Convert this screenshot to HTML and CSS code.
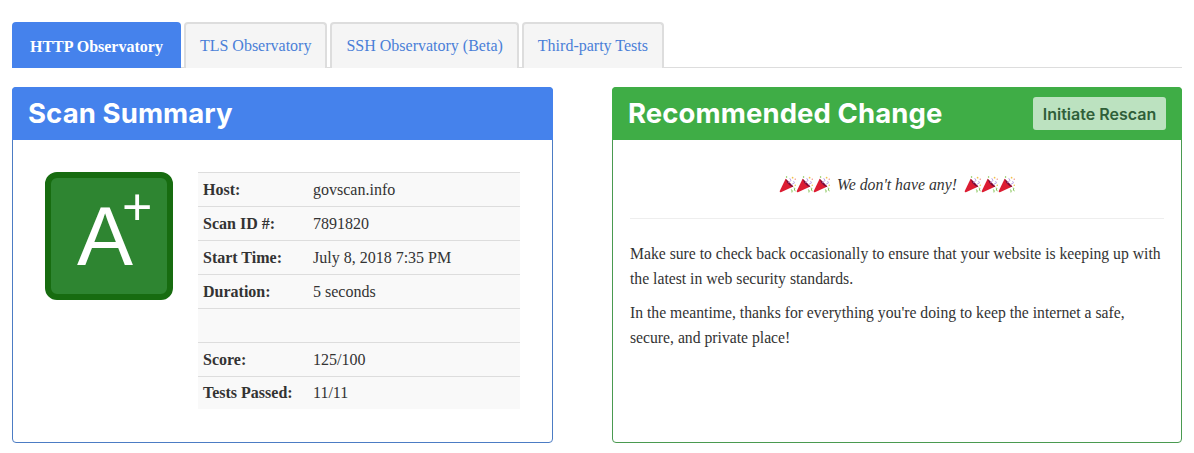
FILE: index.html
```html
<!DOCTYPE html>
<html lang="en">
<head>
    <meta charset="UTF-8">
    <meta name="viewport" content="width=device-width, initial-scale=1.0">
    <title>Observatory</title>
    <link rel="stylesheet" href="styles.css">
</head>
<body>
    <svg class="svg-defs" width="0" height="0" aria-hidden="true">
        <symbol id="popper" viewBox="0 0 18 18">
            <path d="M7 2.8 L0.8 16 Q0.5 17.5 2 17.2 L15.2 11 Z" fill="#dc1c32"/>
            <path d="M7 2.8 L15.2 11 Q14 12 11.8 10.4 Q8 7.4 7 2.8 Z" fill="#7a0c38"/>
            <path d="M10 7.5 L12.6 4.6 L11.4 2.4" stroke="#b49ae0" stroke-width="1" fill="none"/>
            <path d="M13 9 L16.4 7.4 L15.4 5.4" stroke="#b49ae0" stroke-width="0.9" fill="none"/>
            <circle cx="14.4" cy="1.8" r="0.9" fill="#f2c24a"/>
            <circle cx="17.2" cy="9.8" r="0.8" fill="#f2c24a"/>
            <circle cx="8" cy="1" r="0.8" fill="#7cc04a"/>
            <path d="M15.6 12.6 L16.8 13.2 L16.2 15 L17.6 15.8 M12.6 14.4 L14 15.4 L13.6 17.4" stroke="#7cc04a" stroke-width="1" fill="none"/>
            <circle cx="17.2" cy="3.4" r="0.7" fill="#ee7a6c"/>
        </symbol>
    </svg>

    <ul class="tabs">
        <li class="tab tab-active">HTTP Observatory</li>
        <li class="tab">TLS Observatory</li>
        <li class="tab">SSH Observatory (Beta)</li>
        <li class="tab">Third-party Tests</li>
    </ul>

    <div class="panels">
        <section class="panel panel-blue">
            <header class="panel-heading">
                <h2>Scan Summary</h2>
            </header>
            <div class="panel-body summary-body">
                <div class="grade">
                    <span class="grade-text">A<sup class="grade-plus">+</sup></span>
                </div>
                <table class="summary-table">
                    <tbody>
                        <tr><th>Host:</th><td>govscan.info</td></tr>
                        <tr><th>Scan ID #:</th><td>7891820</td></tr>
                        <tr><th>Start Time:</th><td>July 8, 2018 7:35 PM</td></tr>
                        <tr><th>Duration:</th><td>5 seconds</td></tr>
                        <tr><th>&nbsp;</th><td></td></tr>
                        <tr><th>Score:</th><td>125/100</td></tr>
                        <tr class="last-row"><th>Tests Passed:</th><td>11/11</td></tr>
                    </tbody>
                </table>
            </div>
        </section>

        <section class="panel panel-green">
            <header class="panel-heading">
                <h2>Recommended Change</h2>
                <button class="rescan-btn" type="button">Initiate Rescan</button>
            </header>
            <div class="panel-body change-body">
                <div class="celebrate">
                    <span class="poppers">
                        <svg><use href="#popper"/></svg><svg><use href="#popper"/></svg><svg><use href="#popper"/></svg>
                    </span>
                    <em>We don't have any!</em>
                    <span class="poppers">
                        <svg><use href="#popper"/></svg><svg><use href="#popper"/></svg><svg><use href="#popper"/></svg>
                    </span>
                </div>
                <hr>
                <p>Make sure to check back occasionally to ensure that your website is keeping up with the latest in web security standards.</p>
                <p>In the meantime, thanks for everything you're doing to keep the internet a safe, secure, and private place!</p>
            </div>
        </section>
    </div>
</body>
</html>
```

FILE: styles.css
```css
body { margin: 0; padding: 22px 12px 0; font-family: "Liberation Serif", serif; font-size: 16px; line-height: 1.6; color: #333; background-color: #fff; }
.svg-defs { position: absolute; }

/* Tabs */
.tabs { display: flex; gap: 3px; height: 46px; box-sizing: border-box; margin: 0 0 19px; padding: 0; list-style: none; border-bottom: 1px solid #ddd; }
.tab { display: flex; align-items: center; height: 46px; box-sizing: border-box; padding: 0 14px; color: #4a7fd8; background-color: #f5f5f5; border: 2px solid #ddd; border-bottom: none; border-radius: 4px 4px 0 0; }
.tab-active { padding: 4px 18px 0; color: #fff; font-weight: bold; background-color: #4582ec; border: none; }

/* Panels */
.panels { display: flex; justify-content: space-between; align-items: stretch; }
.panel { display: flex; flex-direction: column; height: 356px; box-sizing: border-box; border: 1px solid; border-radius: 4px; }
.panel-blue { width: 541px; border-color: #4c7cc4; }
.panel-green { width: 570px; border-color: #4a9a50; }
.panel-heading { display: flex; align-items: center; justify-content: space-between; height: 53px; margin: -1px -1px 0; padding: 0 16px; box-sizing: border-box; color: #fff; border-radius: 4px 4px 0 0; }
.panel-blue .panel-heading { background-color: #4582ec; }
.panel-green .panel-heading { background-color: #3fad46; }
.panel-heading h2 { margin: 0; font-family: Inter, sans-serif; font-size: 27.5px; font-weight: 700; letter-spacing: 0.1px; line-height: 1; }
.rescan-btn { width: 133px; height: 33px; padding: 0; font-family: Inter, sans-serif; font-size: 16px; font-weight: 600; color: #2f5f39; background-color: #bce2c0; border: none; border-radius: 3px; }

/* Scan summary */
.summary-body { display: flex; gap: 25px; padding: 32px 32px 0; }
.grade { display: flex; align-items: center; width: 128px; height: 128px; box-sizing: border-box; flex-shrink: 0; padding-left: 26px; background-color: #2e8531; border: 6px solid #176c10; border-radius: 12px; }
.grade-text { font-family: "Liberation Sans", sans-serif; font-size: 84px; line-height: 1; color: #fff; }
.grade-plus { margin-left: -11px; font-size: 52px; line-height: 0; vertical-align: 40px; }
.summary-table { width: 322px; height: 237px; border-collapse: collapse; background-color: #f9f9f9; }
.summary-table th, .summary-table td { height: 34px; padding: 0 5px; box-sizing: border-box; text-align: left; border-top: 1px solid #ddd; }
.summary-table th { width: 110px; white-space: nowrap; }
.last-row th, .last-row td { height: 32px; }

/* Recommended change */
.change-body { padding: 32px 17px 0; }
.celebrate { display: flex; align-items: center; justify-content: center; gap: 7px; height: 25px; font-size: 15.8px; }
.poppers { display: flex; }
.poppers svg { width: 17px; height: 17px; }
hr { height: 1px; margin: 21px 0 22px; border: none; background-color: #eee; }
p { margin: 0 0 9px; font-size: 15.7px; line-height: 25px; }
```
